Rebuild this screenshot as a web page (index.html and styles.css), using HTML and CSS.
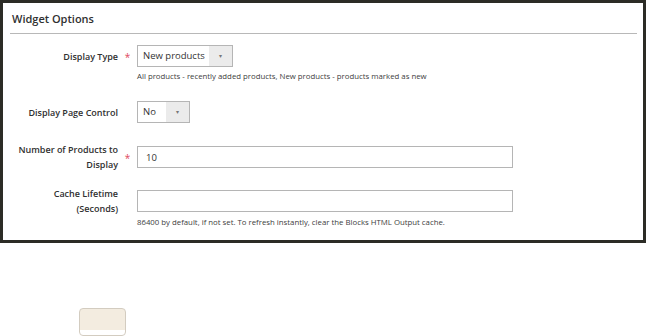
FILE: index.html
```html
<!DOCTYPE html>
<html lang="en">
<head>
<meta charset="UTF-8">
<title>Widget Options</title>
<link rel="stylesheet" href="styles.css">
</head>
<body>
  <div class="panel">
    <h2 class="panel-title">Widget Options</h2>

    <div class="fields">
      <div class="field">
        <label class="field-label">Display Type</label>
        <span class="required">*</span>
        <div class="select wide">
          <span class="select-value">New products</span>
          <span class="select-arrow">&#9662;</span>
        </div>
        <p class="note">All products - recently added products, New products - products marked as new</p>
      </div>

      <div class="field">
        <label class="field-label">Display Page Control</label>
        <span class="required"></span>
        <div class="select narrow">
          <span class="select-value">No</span>
          <span class="select-arrow">&#9662;</span>
        </div>
      </div>

      <div class="field two-line">
        <label class="field-label">Number of Products to Display</label>
        <span class="required">*</span>
        <input type="text" class="text-input" value="10">
      </div>

      <div class="field two-line">
        <label class="field-label">Cache Lifetime (Seconds)</label>
        <span class="required"></span>
        <input type="text" class="text-input" value="">
        <p class="note">86400 by default, if not set. To refresh instantly, clear the Blocks HTML Output cache.</p>
      </div>
    </div>
  </div>

  <button type="button" class="insert-btn"></button>
</body>
</html>
```

FILE: styles.css
```css
body {
  margin: 0;
  background: #fff;
  font-family: "Open Sans", Arial, sans-serif;
  color: #333;
}
.panel {
  width: 640px;
  height: 237px;
  border: 3px solid #2c2c26;
  background: #fff;
}
.panel-title {
  margin: 0 6px 0 7px;
  padding: 8px 0 7px 2px;
  font-size: 11px;
  font-weight: 600;
  line-height: 15px;
  color: #303030;
  border-bottom: 1px solid #b8b8b8;
}
.fields {
  padding-top: 11px;
}
.field {
  display: grid;
  grid-template-columns: 115px 19px auto;
  align-items: center;
  margin-bottom: 19px;
}
.field.two-line {
  margin-bottom: 14px;
}
.field-label {
  padding-left: 10px;
  text-align: right;
  font-size: 9px;
  font-weight: 600;
  line-height: 15px;
  color: #303030;
}
.required {
  text-align: center;
  color: #e0475c;
  font-size: 10px;
  padding-top: 2px;
}
.select {
  display: flex;
  height: 20px;
  border: 1px solid #b5b5b5;
  background: #fff;
  font-size: 9.5px;
  color: #333;
}
.select.wide {
  width: 94px;
}
.select.narrow {
  width: 51px;
}
.select-value {
  flex: 1;
  padding-left: 5px;
  line-height: 20px;
}
.select-arrow {
  width: 23px;
  background: #ebebeb;
  text-align: center;
  line-height: 20px;
  font-size: 6px;
  color: #777;
}
.text-input {
  width: 376px;
  height: 22px;
  box-sizing: border-box;
  margin: 0;
  border: 1px solid #b5b5b5;
  padding: 0 8px;
  font-family: "Open Sans", Arial, sans-serif;
  font-size: 9.5px;
  color: #333;
}
.note {
  grid-column: 3;
  margin: 3px 0 0;
  font-size: 7.8px;
  line-height: 12px;
  color: #404040;
}
.two-line .note {
  margin-top: 0;
}
.insert-btn {
  display: block;
  margin: 65px 0 0 79px;
  width: 47px;
  height: 28px;
  border: 1px solid #d3ccc0;
  border-radius: 4px;
  background: linear-gradient(#f3ece0 0 80%, #fff 80%);
}
```
